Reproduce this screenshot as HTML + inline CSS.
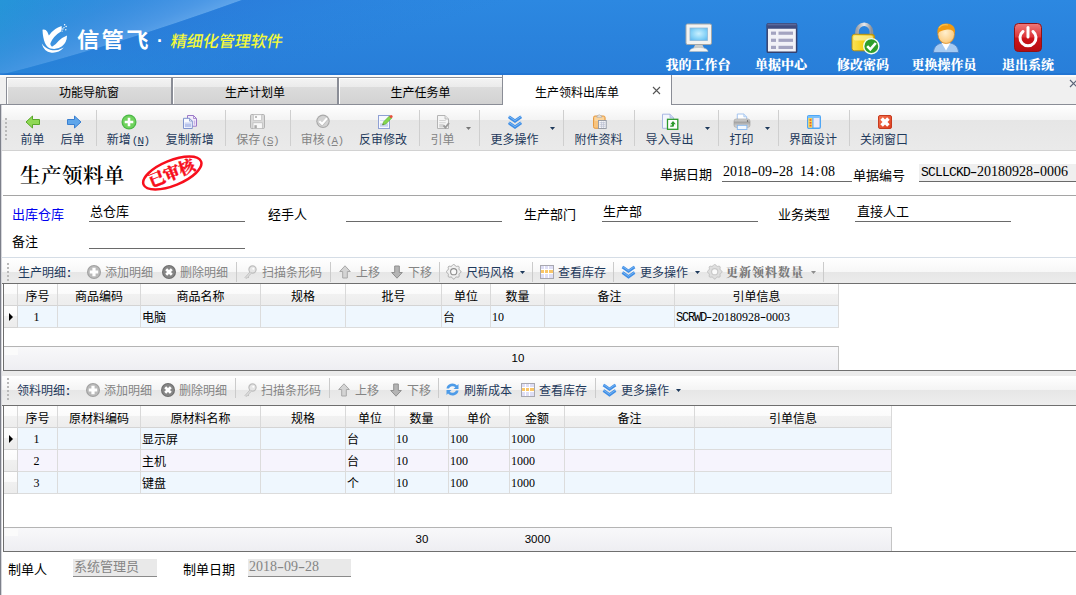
<!DOCTYPE html>
<html lang="zh-CN">
<head>
<meta charset="utf-8">
<title>生产领料出库单</title>
<style>
*{box-sizing:border-box;margin:0;padding:0}
html,body{width:1076px;height:595px;overflow:hidden;background:#fff}
body{position:relative;font-family:"Liberation Sans","Noto Sans CJK SC",sans-serif;font-size:12px;color:#000}
.a{position:absolute;white-space:nowrap}
.serif{font-family:"Liberation Serif","Noto Serif CJK SC",serif}
.bold{font-weight:bold}
#hdr{left:0;top:0;width:1076px;height:75px;overflow:hidden;background:#2a80dd}
.hl{color:#fff;font-weight:900;font-size:13px;top:58px;text-align:center;width:90px;line-height:14px}
#tabbar{left:0;top:75px;width:1076px;height:30px;background:linear-gradient(#fbfbfb 0,#fbfbfb 2px,#f0f0f0 2px);border-bottom:1px solid #8a8d96}
.tab{top:77px;height:27px;border:1px solid #8a8d96;border-bottom:none;background:linear-gradient(#f4f4f4 0%,#ebebeb 34%,#dcdcdc 34%,#d2d2d2 100%);box-shadow:inset 1px 1px 0 #fff;text-align:center;line-height:30px;font-size:12px}
#tb{left:1px;top:105px;width:1075px;height:46px;background:linear-gradient(#fff 0,#f3f3f3 15px,#e6e6e6 15px,#eaeaea 45px);border-bottom:1px solid #d2d2d2}
#lb1{left:0;top:105px;width:1px;height:490px;background:#7d808a}
#lb2{left:1px;top:105px;width:1px;height:490px;background:#d6d7dc}
.grip{width:2px;height:2px;background:#b9b9b9}
.tbt{top:133px;font-size:12px;color:#1e395b;text-align:center;line-height:14px}
.ak{font-family:"Liberation Mono",monospace;font-size:11px;letter-spacing:-0.8px;margin-left:1px}
.dis{color:#848484 !important}
.sep{top:110px;width:1px;height:36px;background:#cfcfcf}
.dd{width:0;height:0;border-left:3px solid transparent;border-right:3px solid transparent;border-top:3px solid #1e395b}
.lbl{font-size:13px;line-height:16px}
.fld{font-family:"Liberation Serif","Noto Sans CJK SC",serif;font-size:14px;line-height:16px}
.pb{display:inline-block;width:7px;text-align:center}
.mb{font-family:"Liberation Mono",monospace;font-size:13px;letter-spacing:-0.8px}
.ps{display:inline-block;width:6px;text-align:center}
.ms{font-family:"Liberation Mono",monospace;font-size:12px;letter-spacing:-1.2px}
.ul{height:1px;background:#6a6a6a}
.stb{left:2px;width:1074px;border-bottom:1px solid #6f6f6f}
#stb1{top:257px;height:27px;border-top:1px solid #d5dde6;background:linear-gradient(#fff 0,#f7f7f7 14px,#e6e6e6 14px,#ececec 25px)}
#stb2{top:371px;height:35px;background:linear-gradient(#ebebeb 0,#ebebeb 5px,#fff 5px,#f4f4f4 19px,#e6e6e6 19px,#eeeeee 34px)}
.st{font-size:12px;line-height:14px;color:#1e395b}
.ssep{width:1px;height:20px;background:#cbcbcb}
.grid{border-left:1px solid #6f6f6f;border-bottom:1px solid #6f6f6f;background:#fff;overflow:hidden}
.gh{top:0;height:22px;background:linear-gradient(#fefefe 0%,#fbfbfb 45%,#f1f1f1 50%,#ededed 100%);border-right:1px solid #d9d9d9;border-bottom:1px solid #d4d4d4;text-align:center;line-height:26px;font-size:12px;overflow:hidden}
.gc{height:22px;border-right:1px solid #dcdcdc;border-bottom:1px solid #dcdcdc;line-height:21px;padding-top:2px;font-size:12px;padding-left:1px;overflow:hidden}
.gc.c{text-align:center;padding-left:0;padding-right:2px}
.num{font-family:"Liberation Serif",serif;font-size:12px;position:relative;top:-1px}
.hy{transform:scaleX(1.5)}
.col{margin-left:1px;font-weight:900}
.r1{background:#eff7fe}
.r2{background:#f6f4fd}
.ind{background:linear-gradient(#fefefe 0,#fbfbfb 45%,#f0f0f0 50%,#ececec 100%);border-right:1px solid #d4d4d4;border-bottom:1px solid #d4d4d4}
.tri{position:absolute;left:5px;top:7px;width:0;height:0;border-top:4px solid transparent;border-bottom:4px solid transparent;border-left:4px solid #000}
.gf{background:linear-gradient(#f8f8fa,#eeeef2);border-top:1px solid #b4b4b4;border-right:1px solid #c4c4c4}
.gft{font-size:11.5px;line-height:23px;text-align:center;height:21px}
</style>
</head>
<body>
<!-- HEADER -->
<div id="hdr" class="a">
<svg class="a" style="left:0;top:0" width="1076" height="75" viewBox="0 0 1076 75">
<defs>
<linearGradient id="hg" x1="0" y1="0" x2="0" y2="1"><stop offset="0" stop-color="#2c88e1"/><stop offset="1" stop-color="#287ed9"/></linearGradient>
<linearGradient id="tl" x1="0" y1="0" x2="1" y2="0"><stop offset="0" stop-color="#2596d7" stop-opacity="0.9"/><stop offset="1" stop-color="#2a8ade" stop-opacity="0"/></linearGradient>
<linearGradient id="band" gradientUnits="userSpaceOnUse" x1="60" y1="-20" x2="95" y2="62"><stop offset="0" stop-color="#2f8cdd" stop-opacity="0"/><stop offset="0.5" stop-color="#408fe0" stop-opacity="0.55"/><stop offset="0.85" stop-color="#509ae6" stop-opacity="0.9"/><stop offset="1" stop-color="#5ea4ea"/></linearGradient>
<linearGradient id="low" gradientUnits="userSpaceOnUse" x1="111" y1="45" x2="135" y2="121"><stop offset="0" stop-color="#2977d8" stop-opacity="0.55"/><stop offset="0.35" stop-color="#2979d9" stop-opacity="0.3"/><stop offset="1" stop-color="#287ed9" stop-opacity="0"/></linearGradient>
</defs>
<rect width="1076" height="75" fill="url(#hg)"/>
<rect width="260" height="75" fill="url(#tl)"/>
<path d="M0 75 Q110 47.5 242 0 L0 0 Z" fill="url(#band)"/>
<path d="M0 75 Q110 47.5 242 0 L520 0 L420 75 Z" fill="url(#low)"/>
<rect y="73" width="1076" height="2" fill="#1b6acb" opacity="0.45"/>
</svg>
</div>
<!-- logo -->
<svg class="a" style="left:38px;top:20px" width="34" height="36" viewBox="0 0 34 36">
<path d="M4.500 9.700 Q7.500 8.800 9.300 11.800 L10.900 15.400 Q16 8 23.600 5.900 Q24.200 9 23 11.600 Q15.500 16 12.400 23.300 Q12 26 14 26.800 Q18 24.500 20.500 21 Q24 17.300 29 15.400 Q29 22 24 26.300 Q19 30.200 12.500 28.600 Q5.200 26 4.500 9.700 Z" fill="#fff"/>
<path d="M3.800 23.500 Q5.500 31.500 13.500 32.700 Q20.500 33.400 25.800 27.600 Q19.500 31.300 13 30 Q7 28.400 3.800 23.500 Z" fill="#fff"/>
<circle cx="26.600" cy="4.800" r="0.75" fill="#fff"/><circle cx="28.100" cy="6.400" r="0.75" fill="#fff"/><circle cx="26" cy="7.600" r="0.7" fill="#fff"/><circle cx="27.800" cy="9.700" r="0.7" fill="#fff"/><circle cx="24.900" cy="9" r="0.7" fill="#fff"/><circle cx="24.100" cy="11.100" r="0.65" fill="#fff"/>
</svg>
<div class="a" style="left:77px;top:24.5px;font-size:21px;line-height:30px;color:#fff;font-weight:700;letter-spacing:2.2px;transform:scaleX(1.06);transform-origin:0 0">信管飞</div>
<div class="a" style="left:157px;top:30px;font-size:18px;line-height:22px;color:#fff;font-weight:bold">·</div>
<div class="a" style="left:171px;top:32px;font-size:16px;line-height:20px;color:#f4f93a;font-weight:500;transform:skewX(-10deg);letter-spacing:0px">精细化管理软件</div>

<!-- header icons -->
<svg class="a" style="left:685px;top:23px" width="28" height="30" viewBox="0 0 28 30">
<defs><radialGradient id="scr" cx="0.5" cy="0.45" r="0.7"><stop offset="0" stop-color="#c9f0ff"/><stop offset="0.6" stop-color="#86d2f7"/><stop offset="1" stop-color="#5fb6ee"/></radialGradient></defs>
<rect x="1" y="1" width="25.5" height="20.5" rx="1.5" fill="#f3f3f1" stroke="#a5a8a8" stroke-width="1"/>
<rect x="5" y="5" width="17.5" height="12.5" fill="url(#scr)" stroke="#8fb8d8" stroke-width="0.8"/>
<path d="M10 22 L17.5 22 L19 25 L8.5 25 Z" fill="#c9cccc"/>
<path d="M4.5 28.5 C5 25.5 9 24.5 13.7 24.5 C18.5 24.5 22.5 25.5 23 28.5 Z" fill="#f4f4f2" stroke="#b9bcbc" stroke-width="0.6"/>
</svg>
<svg class="a" style="left:766px;top:23px" width="32" height="30" viewBox="0 0 32 30">
<rect x="1.2" y="1" width="29.4" height="28.3" rx="1" fill="#f1f1f7" stroke="#35406e" stroke-width="1.5"/>
<rect x="0.8" y="0.3" width="30.2" height="5.4" rx="1" fill="#3f4d80"/>
<rect x="1.5" y="0.8" width="28.8" height="1.6" fill="#5a689a"/>
<rect x="5" y="8.6" width="5" height="3.2" fill="#a3a3c0"/><rect x="12.5" y="8.6" width="14.5" height="3.2" fill="#a3a3c0"/>
<rect x="5" y="15.7" width="5" height="3.2" fill="#a3a3c0"/><rect x="12.5" y="15.7" width="14.5" height="3.2" fill="#a3a3c0"/>
<rect x="5" y="22.8" width="5" height="3.2" fill="#a3a3c0"/><rect x="12.5" y="22.8" width="14.5" height="3.2" fill="#a3a3c0"/>
</svg>
<svg class="a" style="left:850px;top:22px" width="32" height="34" viewBox="0 0 32 34">
<defs><linearGradient id="lk" x1="0" y1="0" x2="1" y2="0"><stop offset="0" stop-color="#f9e25a"/><stop offset="0.45" stop-color="#f6d21c"/><stop offset="1" stop-color="#d9a90c"/></linearGradient>
<linearGradient id="shk" x1="0" y1="0" x2="1" y2="0"><stop offset="0" stop-color="#9ea2a8"/><stop offset="0.5" stop-color="#e8eaee"/><stop offset="1" stop-color="#8f9399"/></linearGradient></defs>
<path d="M7 14 V9.5 a7.2 7.2 0 0 1 14.400 0 V14" fill="none" stroke="url(#shk)" stroke-width="3.6"/>
<rect x="2" y="12.3" width="22.5" height="16.5" rx="2.5" fill="url(#lk)" stroke="#b88d08" stroke-width="0.9"/>
<rect x="3.5" y="13.6" width="19.5" height="5" rx="2" fill="#fdf3a0" opacity="0.75"/>
<circle cx="21.3" cy="24.2" r="7.6" fill="#2f9e2c" stroke="#f4fff0" stroke-width="1.4"/>
<path d="M17.200 24.200 L20.300 27.400 L25.800 21" fill="none" stroke="#fff" stroke-width="2.6"/>
</svg>
<svg class="a" style="left:932px;top:22px" width="28" height="32" viewBox="0 0 28 32">
<defs><radialGradient id="fc" cx="0.45" cy="0.4" r="0.7"><stop offset="0" stop-color="#fff0cf"/><stop offset="0.7" stop-color="#fbd08a"/><stop offset="1" stop-color="#eea94e"/></radialGradient></defs>
<path d="M1.500 30.500 C1.500 24 6.500 20.500 14 20.500 C21.500 20.500 26.500 24 26.500 30.500 Z" fill="#a5caf2" stroke="#4f86cc" stroke-width="1"/>
<path d="M9.500 20.800 L14 28.500 L18.500 20.800 Z" fill="#fff"/>
<ellipse cx="14.200" cy="12.300" rx="8.300" ry="9.300" fill="url(#fc)" stroke="#d98a1e" stroke-width="0.7"/>
<path d="M5.600 11.500 C4.500 4.500 9.500 1.200 14.500 1.500 C20.500 1.700 24 5.500 22.800 11.500 C21.500 8.500 18 6.800 14 7.800 C10.500 8.500 7.500 9 5.600 11.500 Z" fill="#f09a12"/>
<path d="M7 6 C9 3 13 2.300 16 3" fill="none" stroke="#fbc04e" stroke-width="1.2"/>
</svg>
<svg class="a" style="left:1014px;top:23px" width="28" height="29" viewBox="0 0 28 29">
<defs><linearGradient id="rg" x1="0" y1="0" x2="0" y2="1"><stop offset="0" stop-color="#ef7a7a"/><stop offset="0.48" stop-color="#dc3438"/><stop offset="0.52" stop-color="#cc1419"/><stop offset="1" stop-color="#b50d12"/></linearGradient></defs>
<rect x="0.5" y="0.5" width="27" height="28" rx="4" fill="url(#rg)" stroke="#8f1216" stroke-width="1"/>
<path d="M9 8.500 A8 8 0 1 0 19 8.500" fill="none" stroke="#fff" stroke-width="3" stroke-linecap="round"/>
<line x1="14" y1="4.500" x2="14" y2="14" stroke="#fff" stroke-width="3" stroke-linecap="round"/>
</svg>
<div class="a hl serif" style="left:653px">我的工作台</div>
<div class="a hl serif" style="left:736px">单据中心</div>
<div class="a hl serif" style="left:818px">修改密码</div>
<div class="a hl serif" style="left:899px">更换操作员</div>
<div class="a hl serif" style="left:983px">退出系统</div>

<!-- TABS -->
<div id="tabbar" class="a"></div>
<div class="a tab" style="left:6px;width:166px">功能导航窗</div>
<div class="a tab" style="left:172px;width:166px">生产计划单</div>
<div class="a tab" style="left:338px;width:165px">生产任务单</div>
<div class="a" style="left:502px;top:75px;width:170px;height:30px;background:#fff;border-left:1px solid #8a8d96;border-right:1px solid #8a8d96;line-height:36px;font-size:12px;padding-left:32px">生产领料出库单</div>
<svg class="a" style="left:652px;top:86px" width="9" height="9" viewBox="0 0 9 9"><path d="M1 1 L8 8 M8 1 L1 8" stroke="#555" stroke-width="1.1"/></svg>
<svg class="a" style="left:1069px;top:79px" width="9" height="9" viewBox="0 0 9 9"><path d="M1 1 L8 8 M8 1 L1 8" stroke="#5a6478" stroke-width="1.2"/></svg>
<!-- TOOLBAR -->
<div id="tb" class="a"></div>
<div class="a" id="lb1"></div><div class="a" id="lb2"></div>
<div class="a grip" style="left:5px;top:118px"></div>
<div class="a grip" style="left:5px;top:122px"></div>
<div class="a grip" style="left:5px;top:126px"></div>
<div class="a grip" style="left:5px;top:130px"></div>
<div class="a grip" style="left:5px;top:134px"></div>
<div class="a grip" style="left:5px;top:138px"></div>
<div class="a tbt" style="left:-7.5px;width:80px">前单</div>
<div class="a tbt" style="left:32.5px;width:80px">后单</div>
<div class="a tbt" style="left:88.0px;width:80px">新增<span class="ak">(<u>N</u>)</span></div>
<div class="a tbt" style="left:149.7px;width:80px">复制新增</div>
<div class="a tbt dis" style="left:217.5px;width:80px">保存<span class="ak">(<u>S</u>)</span></div>
<div class="a tbt dis" style="left:282.0px;width:80px">审核<span class="ak">(<u>A</u>)</span></div>
<div class="a tbt" style="left:343.0px;width:80px">反审修改</div>
<div class="a tbt dis" style="left:402.5px;width:80px">引单</div>
<div class="a tbt" style="left:474.5px;width:80px">更多操作</div>
<div class="a tbt" style="left:558.5px;width:80px">附件资料</div>
<div class="a tbt" style="left:629.5px;width:80px">导入导出</div>
<div class="a tbt" style="left:701.5px;width:80px">打印</div>
<div class="a tbt" style="left:773.0px;width:80px">界面设计</div>
<div class="a tbt" style="left:844.0px;width:80px">关闭窗口</div>
<div class="a sep" style="left:96px"></div>
<div class="a sep" style="left:225px"></div>
<div class="a sep" style="left:290px"></div>
<div class="a sep" style="left:419px"></div>
<div class="a sep" style="left:479px"></div>
<div class="a sep" style="left:563px"></div>
<div class="a sep" style="left:634px"></div>
<div class="a sep" style="left:718px"></div>
<div class="a sep" style="left:778px"></div>
<div class="a sep" style="left:849px"></div>
<svg class="a" style="left:466px;top:127px" width="5" height="3" viewBox="0 0 5 3"><path d="M0 0 H5 L2.500 3 Z" fill="#777"/></svg>
<svg class="a" style="left:550px;top:127px" width="5" height="3" viewBox="0 0 5 3"><path d="M0 0 H5 L2.500 3 Z" fill="#1e395b"/></svg>
<svg class="a" style="left:705px;top:127px" width="5" height="3" viewBox="0 0 5 3"><path d="M0 0 H5 L2.500 3 Z" fill="#1e395b"/></svg>
<svg class="a" style="left:765px;top:127px" width="5" height="3" viewBox="0 0 5 3"><path d="M0 0 H5 L2.500 3 Z" fill="#1e395b"/></svg>
<svg class="a" style="left:25px;top:115px" width="16" height="14" viewBox="0 0 16 14"><path d="M1 7 L7.5 1 V4.5 H14.5 V9.5 H7.5 V13 Z" fill="#8fd854" stroke="#5aa82a" stroke-width="1"/></svg>
<svg class="a" style="left:66px;top:115px" width="16" height="14" viewBox="0 0 16 14"><path d="M15 7 L8.5 1 V4.5 H1.5 V9.5 H8.5 V13 Z" fill="#5fa6ea" stroke="#3a7fd0" stroke-width="1"/></svg>
<svg class="a" style="left:121px;top:114px" width="16" height="16" viewBox="0 0 16 16"><circle cx="8" cy="8" r="7.5" fill="#4cb848"/><circle cx="8" cy="8" r="6.3" fill="#6fd25c"/><path d="M8 3.7 V12.3 M3.7 8 H12.3" stroke="#fff" stroke-width="2.6"/></svg>
<svg class="a" style="left:183px;top:115px" width="15" height="14" viewBox="0 0 15 14"><path d="M4.500 0.500 H10.500 L13.500 3.500 V11.200 H4.500 Z" fill="#f3edfb" stroke="#9a78c8"/><path d="M10.500 0.500 V3.500 H13.500" fill="none" stroke="#9a78c8" stroke-width="0.8"/><rect x="10.800" y="5.500" width="1.400" height="4.200" fill="#c9b4e6"/><path d="M0.500 3.300 H6.500 L9.300 6.100 V13.500 H0.500 Z" fill="#f8faff" stroke="#7f93cc"/><path d="M6.500 3.300 V6.100 H9.300" fill="none" stroke="#7f93cc" stroke-width="0.8"/><rect x="1.800" y="7.600" width="6.200" height="4.600" fill="#b7c3ec"/><rect x="1.800" y="7.600" width="6.200" height="1" fill="#dfe5f8"/></svg>
<svg class="a" style="left:250px;top:114px" width="15" height="15" viewBox="0 0 15 15"><rect x="0.500" y="0.500" width="14" height="14" rx="1.200" fill="#d9d9d9" stroke="#b2b2b2"/><rect x="3.500" y="0.800" width="8" height="5.600" fill="#fcfcfc" stroke="#c2c2c2" stroke-width="0.7"/><rect x="5.200" y="2.200" width="1.600" height="1.600" fill="#9a9a9a"/><rect x="3" y="8.800" width="9.300" height="5.700" fill="#f8f8f8" stroke="#b8b8b8" stroke-width="0.7"/><rect x="4.400" y="11.200" width="2.400" height="3" fill="#a9a9a9"/></svg>
<svg class="a" style="left:316px;top:114px" width="14" height="15" viewBox="0 0 14 15"><circle cx="7" cy="7.300" r="6.700" fill="#a9a9a9"/><circle cx="7" cy="7.300" r="5.600" fill="#d2d2d2"/><path d="M3.300 7.800 L6.100 10.500 L11.200 4.600" fill="none" stroke="#8f8f8f" stroke-width="2.600" opacity="0.35"/><path d="M3.300 7.200 L6.100 10 L11 4.300" fill="none" stroke="#fff" stroke-width="2.200"/></svg>
<svg class="a" style="left:378px;top:114px" width="15" height="15" viewBox="0 0 15 15"><rect x="0.500" y="1.500" width="11" height="13" fill="#f6f8fe" stroke="#8fa0d4"/><rect x="2" y="6" width="8" height="0.800" fill="#cdd6f0"/><rect x="2" y="9.300" width="8" height="3.500" fill="#c9d3f0"/><path d="M4.500 11 L5.600 7.800 L11.400 2 L13.600 4.200 L7.800 10 Z" fill="#84d650" stroke="#58b02c" stroke-width="0.6"/><circle cx="13.100" cy="2.400" r="1.500" fill="#e4503c"/><path d="M4.500 11 L5 9.500 L6 10.500 Z" fill="#6a5a4a"/></svg>
<svg class="a" style="left:437px;top:115px" width="13" height="14" viewBox="0 0 13 14"><path d="M0.500 0.500 H8 L11.500 4 V13.500 H0.500 Z" fill="#f5f5f5" stroke="#b4b4b4"/><path d="M8 0.500 V4 H11.500" fill="#e4e4e4" stroke="#b4b4b4" stroke-width="0.8"/><rect x="2.200" y="5" width="6.500" height="0.900" fill="#cfcfcf"/><rect x="2.200" y="7.300" width="6.500" height="0.900" fill="#cfcfcf"/><rect x="2.200" y="9" width="4.500" height="3.500" fill="#d4d4d4"/><path d="M6.500 10.300 L8.400 12.600 L12 8" fill="none" stroke="#9c9c9c" stroke-width="1.900"/></svg>
<svg class="a" style="left:507px;top:115px" width="16" height="14" viewBox="0 0 16 14"><path d="M1.800 1.800 L8 6 L14.200 1.800" fill="none" stroke="#3f8ee6" stroke-width="3.200"/><path d="M1.800 7.800 L8 12 L14.200 7.800" fill="none" stroke="#3f8ee6" stroke-width="3.200"/><path d="M1.800 1.400 L8 5.600 L14.200 1.400" fill="none" stroke="#7cb8f4" stroke-width="1"/><path d="M1.800 7.400 L8 11.600 L14.200 7.400" fill="none" stroke="#7cb8f4" stroke-width="1"/></svg>
<svg class="a" style="left:593px;top:114px" width="14" height="15" viewBox="0 0 14 15"><rect x="0.500" y="2" width="11.600" height="12.300" rx="1.600" fill="#f8c47e" stroke="#e59a42"/><rect x="1.600" y="3" width="9.400" height="4" rx="1" fill="#fbd9a6" opacity="0.8"/><path d="M3.800 3.200 Q3.800 1.400 5.200 1.400 Q6.200 0.200 7.300 1.400 Q8.800 1.400 8.800 3.200 Z" fill="#ececec" stroke="#a9a9a9" stroke-width="0.700"/><rect x="5.500" y="6.500" width="7.700" height="8" fill="#f6f7fa" stroke="#8f95a3" stroke-width="0.900"/><path d="M6.500 8.600 H12.300 M6.500 10.400 H12.300 M6.500 12.200 H12.300 M8.600 7.500 V14 M10.600 7.500 V14" stroke="#b9bfd0" stroke-width="0.700"/></svg>
<svg class="a" style="left:662px;top:113px" width="17" height="17" viewBox="0 0 17 17"><path d="M0.500 1.200 H8 L11.600 4.800 V15.300 H0.500 Z" fill="#f3f6fd" stroke="#a9b7e2"/><path d="M8 1.200 V4.800 H11.600" fill="#cfd8f3" stroke="#a9b7e2" stroke-width="0.8"/><rect x="5.500" y="6.300" width="10.300" height="10" fill="#fff" stroke="#2d9a2d" stroke-width="1.300"/><path d="M8.200 13.800 H11.300 Q12.200 13.500 12 11.300 H13.800 L11 8 L8.300 11.300 H10 Q10.200 12.300 9.600 12.500 H8.200 Z" fill="#2d9a2d"/></svg>
<svg class="a" style="left:733px;top:113px" width="18" height="17" viewBox="0 0 18 17"><defs><linearGradient id="pg" x1="0" y1="0" x2="0" y2="1"><stop offset="0" stop-color="#dadada"/><stop offset="0.45" stop-color="#a2a2a2"/><stop offset="0.55" stop-color="#b4b4b4"/><stop offset="1" stop-color="#dcdcdc"/></linearGradient></defs><path d="M4.300 1 H10.800 L13.700 3.800 V7 H4.300 Z" fill="#fdfeff" stroke="#9cc0ee" stroke-width="0.9"/><path d="M10.800 1 V3.800 H13.700" fill="#d6e6fa" stroke="#9cc0ee" stroke-width="0.7"/><rect x="1" y="6" width="16" height="8.300" rx="2.200" fill="url(#pg)" stroke="#9a9a9a" stroke-width="0.6"/><circle cx="14.600" cy="8" r="0.700" fill="#555"/><rect x="4.300" y="12.300" width="9.600" height="4.200" fill="#f2f8ff" stroke="#84b6ee" stroke-width="0.9"/></svg>
<svg class="a" style="left:807px;top:115px" width="14" height="14" viewBox="0 0 14 14"><rect x="0.700" y="0.700" width="12.600" height="12.600" rx="1.200" fill="#ece9f9" stroke="#4fa6f5" stroke-width="1.400"/><rect x="1" y="1" width="12" height="2" fill="#7cc0fa"/><rect x="1.400" y="3" width="4" height="9.600" fill="#f9d648"/><rect x="2.600" y="4.200" width="1.800" height="1.600" fill="#e2543c"/><rect x="2.600" y="7" width="1.800" height="1.600" fill="#e2543c"/><rect x="2.600" y="9.800" width="1.800" height="1.600" fill="#e2543c"/><line x1="5.900" y1="3" x2="5.900" y2="13" stroke="#4fa6f5" stroke-width="1.100"/></svg>
<svg class="a" style="left:878px;top:115px" width="14" height="14" viewBox="0 0 14 14"><defs><linearGradient id="cg" x1="0" y1="0" x2="1" y2="1"><stop offset="0" stop-color="#f4724e"/><stop offset="1" stop-color="#dc3c1e"/></linearGradient></defs><rect x="0.500" y="0.500" width="13" height="13" rx="1.500" fill="url(#cg)" stroke="#c63a1e"/><path d="M3.600 3.600 L10.400 10.400 M10.400 3.600 L3.600 10.400" stroke="#fff" stroke-width="3.600"/></svg>
<!-- TITLE -->
<div class="a serif" style="left:20px;top:163px;font-size:20.5px;line-height:26px;font-weight:600;letter-spacing:0.5px">生产领料单</div>
<div class="a" style="left:140px;top:153px;width:64px;height:40px"><svg class="a" style="left:0;top:0" width="64" height="40" viewBox="0 0 64 40"><ellipse cx="32.3" cy="20" rx="31" ry="12.5" transform="rotate(-22 32.3 20)" fill="none" stroke="#f80f1c" stroke-width="2.5"/></svg><div class="a serif" style="left:7px;top:11px;width:50px;text-align:center;font-size:16.5px;line-height:20px;font-weight:900;color:#f80f1c;transform:rotate(-22deg);letter-spacing:-0.5px;-webkit-text-stroke:0.3px #f80f1c">已审核</div></div>
<div class="a lbl" style="left:660px;top:167px">单据日期</div>
<div class="a fld" style="left:723px;top:164px">2018<span class="pb hy">-</span>09<span class="pb hy">-</span>28<span class="pb">&nbsp;</span>14<span class="pb">:</span>08</div>
<div class="a ul" style="left:722px;top:181px;width:130px"></div>
<div class="a lbl" style="left:853px;top:168px">单据编号</div>
<div class="a" style="left:919px;top:164px;width:157px;height:17px;background:#efefef"></div>
<div class="a fld" style="left:921px;top:164px"><span class="mb">SCLLCKD</span><span class="pb hy">-</span>20180928<span class="pb hy">-</span>0006</div>
<div class="a ul" style="left:919px;top:181px;width:157px"></div>
<div class="a" style="left:3px;top:195px;width:1073px;height:1px;background:#a5a5a5"></div>
<!-- FORM -->
<div class="a lbl" style="left:12px;top:207px;color:#0000f0">出库仓库</div>
<div class="a lbl" style="left:90px;top:204px">总仓库</div>
<div class="a ul" style="left:89px;top:221px;width:156px"></div>
<div class="a lbl" style="left:268px;top:207px">经手人</div>
<div class="a ul" style="left:346px;top:221px;width:156px"></div>
<div class="a lbl" style="left:524px;top:207px">生产部门</div>
<div class="a lbl" style="left:603px;top:204px">生产部</div>
<div class="a ul" style="left:602px;top:221px;width:156px"></div>
<div class="a lbl" style="left:778px;top:207px">业务类型</div>
<div class="a lbl" style="left:857px;top:204px">直接人工</div>
<div class="a ul" style="left:855px;top:221px;width:156px"></div>
<div class="a lbl" style="left:12px;top:234px">备注</div>
<div class="a ul" style="left:89px;top:248px;width:156px"></div>
<!-- SUBTOOLBAR 1 -->
<div class="a stb" id="stb1"></div>
<div class="a grip" style="left:7px;top:263px"></div>
<div class="a grip" style="left:7px;top:267px"></div>
<div class="a grip" style="left:7px;top:271px"></div>
<div class="a grip" style="left:7px;top:275px"></div>
<div class="a grip" style="left:7px;top:279px"></div>
<div class="a st " style="left:18px;top:266px">生产明细<b class="col">:</b></div>
<svg class="a" style="left:87px;top:265px" width="14" height="14" viewBox="0 0 14 14"><circle cx="7" cy="7" r="7" fill="#a0a0a0"/><circle cx="7" cy="7" r="5.900" fill="#bababa"/><path d="M7 2.800 V11.200 M2.800 7 H11.200" stroke="#fff" stroke-width="3.200"/></svg>
<div class="a st dis" style="left:105px;top:266px">添加明细</div>
<svg class="a" style="left:162px;top:265px" width="14" height="14" viewBox="0 0 14 14"><circle cx="7" cy="7" r="7" fill="#6e6e6e"/><circle cx="7" cy="7" r="5.900" fill="#868686"/><path d="M4.200 4.200 L9.800 9.800 M9.800 4.200 L4.200 9.800" stroke="#fff" stroke-width="2.700"/></svg>
<div class="a st dis" style="left:180px;top:266px">删除明细</div>
<div class="a ssep" style="left:236px;top:262px"></div>
<svg class="a" style="left:244px;top:265px" width="13" height="14" viewBox="0 0 13 14"><circle cx="8.5" cy="4.5" r="3.6" fill="#e6e6e6" stroke="#bdbdbd" stroke-width="1.2"/><circle cx="9.3" cy="3.7" r="1" fill="#fff"/><path d="M6 7 L1 12.5 L2 13.5 L3.2 12.4 L4 13 L5 12 L4.4 11.2 L7.4 8.3" fill="#dedede" stroke="#bdbdbd" stroke-width="0.9"/></svg>
<div class="a st dis" style="left:262px;top:266px">扫描条形码</div>
<div class="a ssep" style="left:330px;top:262px"></div>
<svg class="a" style="left:339px;top:265px" width="12" height="14" viewBox="0 0 12 14"><path d="M6 0.8 L11.3 6.5 H8.3 V13 H3.7 V6.5 H0.7 Z" fill="#d4d4d4" stroke="#a8a8a8" stroke-width="1"/></svg>
<div class="a st dis" style="left:356px;top:266px">上移</div>
<svg class="a" style="left:391px;top:265px" width="12" height="14" viewBox="0 0 12 14"><path d="M6 13.2 L11.3 7.5 H8.3 V1 H3.7 V7.5 H0.7 Z" fill="#b4b4b4" stroke="#8f8f8f" stroke-width="1"/></svg>
<div class="a st dis" style="left:408px;top:266px">下移</div>
<div class="a ssep" style="left:439px;top:262px"></div>
<svg class="a" style="left:446px;top:264px" width="16" height="16" viewBox="0 0 16 16"><path d="M15.0 7.7 L14.9 8.2 L14.6 8.6 L14.1 9.0 L13.7 9.3 L13.3 9.6 L13.1 9.9 L13.0 10.3 L13.0 10.8 L13.1 11.3 L13.2 11.9 L13.1 12.4 L12.9 12.9 L12.4 13.1 L11.9 13.2 L11.3 13.1 L10.8 13.0 L10.3 13.0 L9.9 13.1 L9.6 13.3 L9.3 13.7 L9.0 14.1 L8.6 14.6 L8.2 14.9 L7.7 15.0 L7.2 14.9 L6.8 14.6 L6.4 14.1 L6.1 13.7 L5.8 13.3 L5.5 13.1 L5.1 13.0 L4.6 13.0 L4.1 13.1 L3.5 13.2 L3.0 13.1 L2.5 12.9 L2.3 12.4 L2.2 11.9 L2.3 11.3 L2.4 10.8 L2.4 10.3 L2.3 9.9 L2.1 9.6 L1.7 9.3 L1.3 9.0 L0.8 8.6 L0.5 8.2 L0.4 7.7 L0.5 7.2 L0.8 6.8 L1.3 6.4 L1.7 6.1 L2.1 5.8 L2.3 5.5 L2.4 5.1 L2.4 4.6 L2.3 4.1 L2.2 3.5 L2.3 3.0 L2.5 2.5 L3.0 2.3 L3.5 2.2 L4.1 2.3 L4.6 2.4 L5.1 2.4 L5.5 2.3 L5.8 2.1 L6.1 1.7 L6.4 1.3 L6.8 0.8 L7.2 0.5 L7.7 0.4 L8.2 0.5 L8.6 0.8 L9.0 1.3 L9.3 1.7 L9.6 2.1 L9.9 2.3 L10.3 2.4 L10.8 2.4 L11.3 2.3 L11.9 2.2 L12.4 2.3 L12.9 2.5 L13.1 3.0 L13.2 3.5 L13.1 4.1 L13.0 4.6 L13.0 5.1 L13.1 5.5 L13.3 5.8 L13.7 6.1 L14.1 6.4 L14.6 6.8 L14.9 7.2 Z" fill="#efefef" stroke="#a8a8a8" stroke-width="1"/><circle cx="7.700" cy="7.700" r="3.100" fill="#fafafa" stroke="#8c8c8c" stroke-width="1.100"/></svg>
<div class="a st " style="left:466px;top:266px">尺码风格</div>
<svg class="a" style="left:520px;top:271px" width="5" height="3" viewBox="0 0 5 3"><path d="M0 0 H5 L2.500 3 Z" fill="#1e395b"/></svg>
<div class="a ssep" style="left:532px;top:262px"></div>
<svg class="a" style="left:540px;top:265px" width="14" height="14" viewBox="0 0 14 14"><rect x="0.500" y="0.500" width="13" height="13" fill="#fff" stroke="#a8a8b0" stroke-width="1"/><rect x="1" y="1" width="3" height="3" fill="#dedef5"/><rect x="5" y="1" width="3" height="3" fill="#dedef5"/><rect x="9" y="1" width="4" height="3" fill="#dedef5"/><rect x="1" y="5" width="3" height="3" fill="#f9c668"/><rect x="5" y="5" width="3" height="3" fill="#f9c668"/><rect x="9" y="5" width="4" height="3" fill="#f9c668"/><rect x="1" y="9" width="3" height="4" fill="#dedef5"/><rect x="5" y="9" width="3" height="4" fill="#dedef5"/><rect x="9" y="9" width="4" height="4" fill="#dedef5"/></svg>
<div class="a st " style="left:558px;top:266px">查看库存</div>
<div class="a ssep" style="left:613px;top:262px"></div>
<svg class="a" style="left:621px;top:265px" width="15" height="14" viewBox="0 0 15 14"><path d="M1.500 2 L7.500 6.200 L13.500 2" fill="none" stroke="#3f8ee6" stroke-width="3"/><path d="M1.500 7.600 L7.500 11.800 L13.500 7.600" fill="none" stroke="#3f8ee6" stroke-width="3"/><path d="M1.500 1.500 L7.500 5.700 L13.500 1.500" fill="none" stroke="#7cb8f4" stroke-width="0.900"/><path d="M1.500 7.100 L7.500 11.300 L13.500 7.100" fill="none" stroke="#7cb8f4" stroke-width="0.900"/></svg>
<div class="a st " style="left:640px;top:266px">更多操作</div>
<svg class="a" style="left:695px;top:271px" width="5" height="3" viewBox="0 0 5 3"><path d="M0 0 H5 L2.500 3 Z" fill="#1e395b"/></svg>
<svg class="a" style="left:707px;top:264px" width="16" height="16" viewBox="0 0 16 16"><path d="M15.0 7.7 L14.9 8.2 L14.6 8.6 L14.1 9.0 L13.7 9.3 L13.3 9.6 L13.1 9.9 L13.0 10.3 L13.0 10.8 L13.1 11.3 L13.2 11.9 L13.1 12.4 L12.9 12.9 L12.4 13.1 L11.9 13.2 L11.3 13.1 L10.8 13.0 L10.3 13.0 L9.9 13.1 L9.6 13.3 L9.3 13.7 L9.0 14.1 L8.6 14.6 L8.2 14.9 L7.7 15.0 L7.2 14.9 L6.8 14.6 L6.4 14.1 L6.1 13.7 L5.8 13.3 L5.5 13.1 L5.1 13.0 L4.6 13.0 L4.1 13.1 L3.5 13.2 L3.0 13.1 L2.5 12.9 L2.3 12.4 L2.2 11.9 L2.3 11.3 L2.4 10.8 L2.4 10.3 L2.3 9.9 L2.1 9.6 L1.7 9.3 L1.3 9.0 L0.8 8.6 L0.5 8.2 L0.4 7.7 L0.5 7.2 L0.8 6.8 L1.3 6.4 L1.7 6.1 L2.1 5.8 L2.3 5.5 L2.4 5.1 L2.4 4.6 L2.3 4.1 L2.2 3.5 L2.3 3.0 L2.5 2.5 L3.0 2.3 L3.5 2.2 L4.1 2.3 L4.6 2.4 L5.1 2.4 L5.5 2.3 L5.8 2.1 L6.1 1.7 L6.4 1.3 L6.8 0.8 L7.2 0.5 L7.7 0.4 L8.2 0.5 L8.6 0.8 L9.0 1.3 L9.3 1.7 L9.6 2.1 L9.9 2.3 L10.3 2.4 L10.8 2.4 L11.3 2.3 L11.9 2.2 L12.4 2.3 L12.9 2.5 L13.1 3.0 L13.2 3.5 L13.1 4.1 L13.0 4.6 L13.0 5.1 L13.1 5.5 L13.3 5.8 L13.7 6.1 L14.1 6.4 L14.6 6.8 L14.9 7.2 Z" fill="#dedede" stroke="#c0c0c0" stroke-width="1"/><circle cx="7.700" cy="7.700" r="3.100" fill="#fafafa" stroke="#c8c8c8" stroke-width="1.100"/></svg>
<div class="a st dis bold serif" style="left:726px;top:266px;letter-spacing:1px;font-weight:900;color:#7c7c7c !important">更新领料数量</div>
<svg class="a" style="left:811px;top:271px" width="5" height="3" viewBox="0 0 5 3"><path d="M0 0 H5 L2.500 3 Z" fill="#8d8d8d"/></svg>
<div class="a ssep" style="left:823px;top:262px"></div>
<!-- SUBTOOLBAR 2 -->
<div class="a stb" id="stb2"></div>
<div class="a grip" style="left:7px;top:378px"></div>
<div class="a grip" style="left:7px;top:382px"></div>
<div class="a grip" style="left:7px;top:386px"></div>
<div class="a grip" style="left:7px;top:390px"></div>
<div class="a grip" style="left:7px;top:394px"></div>
<div class="a grip" style="left:7px;top:398px"></div>
<div class="a st " style="left:17px;top:384px">领料明细<b class="col">:</b></div>
<svg class="a" style="left:86px;top:383px" width="14" height="14" viewBox="0 0 14 14"><circle cx="7" cy="7" r="7" fill="#a0a0a0"/><circle cx="7" cy="7" r="5.900" fill="#bababa"/><path d="M7 2.800 V11.200 M2.800 7 H11.200" stroke="#fff" stroke-width="3.200"/></svg>
<div class="a st dis" style="left:104px;top:384px">添加明细</div>
<svg class="a" style="left:161px;top:383px" width="14" height="14" viewBox="0 0 14 14"><circle cx="7" cy="7" r="7" fill="#6e6e6e"/><circle cx="7" cy="7" r="5.900" fill="#868686"/><path d="M4.200 4.200 L9.800 9.800 M9.800 4.200 L4.200 9.800" stroke="#fff" stroke-width="2.700"/></svg>
<div class="a st dis" style="left:179px;top:384px">删除明细</div>
<div class="a ssep" style="left:235px;top:378px"></div>
<svg class="a" style="left:244px;top:383px" width="13" height="14" viewBox="0 0 13 14"><circle cx="8.5" cy="4.5" r="3.6" fill="#e6e6e6" stroke="#bdbdbd" stroke-width="1.2"/><circle cx="9.3" cy="3.7" r="1" fill="#fff"/><path d="M6 7 L1 12.5 L2 13.5 L3.2 12.4 L4 13 L5 12 L4.4 11.2 L7.4 8.3" fill="#dedede" stroke="#bdbdbd" stroke-width="0.9"/></svg>
<div class="a st dis" style="left:261px;top:384px">扫描条形码</div>
<div class="a ssep" style="left:329px;top:378px"></div>
<svg class="a" style="left:338px;top:383px" width="12" height="14" viewBox="0 0 12 14"><path d="M6 0.8 L11.3 6.5 H8.3 V13 H3.7 V6.5 H0.7 Z" fill="#d4d4d4" stroke="#a8a8a8" stroke-width="1"/></svg>
<div class="a st dis" style="left:355px;top:384px">上移</div>
<svg class="a" style="left:390px;top:383px" width="12" height="14" viewBox="0 0 12 14"><path d="M6 13.2 L11.3 7.5 H8.3 V1 H3.7 V7.5 H0.7 Z" fill="#b4b4b4" stroke="#8f8f8f" stroke-width="1"/></svg>
<div class="a st dis" style="left:407px;top:384px">下移</div>
<div class="a ssep" style="left:438px;top:378px"></div>
<svg class="a" style="left:445px;top:382px" width="15" height="15" viewBox="0 0 15 15"><path d="M1.5 6.5 A6 5.5 0 0 1 12 3.5 L13.5 2 V7 H8.5 L10.3 5.2 A3.8 3.5 0 0 0 4 6.5 Z" fill="#4d9be8"/><path d="M13.5 8.5 A6 5.5 0 0 1 3 11.5 L1.5 13 V8 H6.5 L4.7 9.8 A3.8 3.5 0 0 0 11 8.5 Z" fill="#4d9be8"/></svg>
<div class="a st " style="left:464px;top:384px">刷新成本</div>
<svg class="a" style="left:521px;top:383px" width="14" height="14" viewBox="0 0 14 14"><rect x="0.500" y="0.500" width="13" height="13" fill="#fff" stroke="#a8a8b0" stroke-width="1"/><rect x="1" y="1" width="3" height="3" fill="#dedef5"/><rect x="5" y="1" width="3" height="3" fill="#dedef5"/><rect x="9" y="1" width="4" height="3" fill="#dedef5"/><rect x="1" y="5" width="3" height="3" fill="#f9c668"/><rect x="5" y="5" width="3" height="3" fill="#f9c668"/><rect x="9" y="5" width="4" height="3" fill="#f9c668"/><rect x="1" y="9" width="3" height="4" fill="#dedef5"/><rect x="5" y="9" width="3" height="4" fill="#dedef5"/><rect x="9" y="9" width="4" height="4" fill="#dedef5"/></svg>
<div class="a st " style="left:539px;top:384px">查看库存</div>
<div class="a ssep" style="left:595px;top:378px"></div>
<svg class="a" style="left:602px;top:383px" width="15" height="14" viewBox="0 0 15 14"><path d="M1.500 2 L7.500 6.200 L13.500 2" fill="none" stroke="#3f8ee6" stroke-width="3"/><path d="M1.500 7.600 L7.500 11.800 L13.500 7.600" fill="none" stroke="#3f8ee6" stroke-width="3"/><path d="M1.500 1.500 L7.500 5.700 L13.500 1.500" fill="none" stroke="#7cb8f4" stroke-width="0.900"/><path d="M1.500 7.100 L7.500 11.300 L13.500 7.100" fill="none" stroke="#7cb8f4" stroke-width="0.900"/></svg>
<div class="a st " style="left:621px;top:384px">更多操作</div>
<svg class="a" style="left:676px;top:389px" width="5" height="3" viewBox="0 0 5 3"><path d="M0 0 H5 L2.500 3 Z" fill="#1e395b"/></svg>
<!-- GRID 1 -->
<div class="a grid" style="left:3px;top:284px;width:836px;height:87px">
<div class="a gh" style="left:0px;width:14px"></div>
<div class="a gh" style="left:14px;width:40px">序号</div>
<div class="a gh" style="left:54px;width:83px">商品编码</div>
<div class="a gh" style="left:137px;width:120px">商品名称</div>
<div class="a gh" style="left:257px;width:85px">规格</div>
<div class="a gh" style="left:342px;width:96px">批号</div>
<div class="a gh" style="left:438px;width:49px">单位</div>
<div class="a gh" style="left:487px;width:54px">数量</div>
<div class="a gh" style="left:541px;width:130px">备注</div>
<div class="a gh" style="left:671px;width:164px">引单信息</div>
<div class="a ind" style="left:0px;top:22px;width:14px;height:22px"><div class="tri"></div></div>
<div class="a gc r1 c" style="left:14px;top:22px;width:40px"><span class="num">1</span></div>
<div class="a gc r1" style="left:54px;top:22px;width:83px"></div>
<div class="a gc r1" style="left:137px;top:22px;width:120px">电脑</div>
<div class="a gc r1" style="left:257px;top:22px;width:85px"></div>
<div class="a gc r1" style="left:342px;top:22px;width:96px"></div>
<div class="a gc r1" style="left:438px;top:22px;width:49px">台</div>
<div class="a gc r1" style="left:487px;top:22px;width:54px"><span class="num">10</span></div>
<div class="a gc r1" style="left:541px;top:22px;width:130px"></div>
<div class="a gc r1" style="left:671px;top:22px;width:164px"><span class="num"><span class="ms">SCRWD</span><span class="ps hy">-</span>20180928<span class="ps hy">-</span>0003</span></div>
<div class="a gf" style="left:0;top:62px;width:835px;height:24px"></div>
<div class="a" style="left:1px;top:64px;width:13px;height:7px;background:#fbfbfb"></div>
<div class="a gft" style="left:487px;top:63px;width:54px">10</div>
</div>
<!-- GRID 2 -->
<div class="a grid" style="left:3px;top:406px;width:889px;height:146px">
<div class="a gh" style="left:0px;width:14px"></div>
<div class="a gh" style="left:14px;width:40px">序号</div>
<div class="a gh" style="left:54px;width:83px">原材料编码</div>
<div class="a gh" style="left:137px;width:120px">原材料名称</div>
<div class="a gh" style="left:257px;width:85px">规格</div>
<div class="a gh" style="left:342px;width:49px">单位</div>
<div class="a gh" style="left:391px;width:54px">数量</div>
<div class="a gh" style="left:445px;width:61px">单价</div>
<div class="a gh" style="left:506px;width:55px">金额</div>
<div class="a gh" style="left:561px;width:130px">备注</div>
<div class="a gh" style="left:691px;width:197px">引单信息</div>
<div class="a ind" style="left:0px;top:22px;width:14px;height:22px"><div class="tri"></div></div>
<div class="a gc r1 c" style="left:14px;top:22px;width:40px"><span class="num">1</span></div>
<div class="a gc r1" style="left:54px;top:22px;width:83px"></div>
<div class="a gc r1" style="left:137px;top:22px;width:120px">显示屏</div>
<div class="a gc r1" style="left:257px;top:22px;width:85px"></div>
<div class="a gc r1" style="left:342px;top:22px;width:49px">台</div>
<div class="a gc r1" style="left:391px;top:22px;width:54px"><span class="num">10</span></div>
<div class="a gc r1" style="left:445px;top:22px;width:61px"><span class="num">100</span></div>
<div class="a gc r1" style="left:506px;top:22px;width:55px"><span class="num">1000</span></div>
<div class="a gc r1" style="left:561px;top:22px;width:130px"></div>
<div class="a gc r1" style="left:691px;top:22px;width:197px"></div>
<div class="a ind" style="left:0px;top:44px;width:14px;height:22px"></div>
<div class="a gc r2 c" style="left:14px;top:44px;width:40px"><span class="num">2</span></div>
<div class="a gc r2" style="left:54px;top:44px;width:83px"></div>
<div class="a gc r2" style="left:137px;top:44px;width:120px">主机</div>
<div class="a gc r2" style="left:257px;top:44px;width:85px"></div>
<div class="a gc r2" style="left:342px;top:44px;width:49px">台</div>
<div class="a gc r2" style="left:391px;top:44px;width:54px"><span class="num">10</span></div>
<div class="a gc r2" style="left:445px;top:44px;width:61px"><span class="num">100</span></div>
<div class="a gc r2" style="left:506px;top:44px;width:55px"><span class="num">1000</span></div>
<div class="a gc r2" style="left:561px;top:44px;width:130px"></div>
<div class="a gc r2" style="left:691px;top:44px;width:197px"></div>
<div class="a ind" style="left:0px;top:66px;width:14px;height:22px"></div>
<div class="a gc r1 c" style="left:14px;top:66px;width:40px"><span class="num">3</span></div>
<div class="a gc r1" style="left:54px;top:66px;width:83px"></div>
<div class="a gc r1" style="left:137px;top:66px;width:120px">键盘</div>
<div class="a gc r1" style="left:257px;top:66px;width:85px"></div>
<div class="a gc r1" style="left:342px;top:66px;width:49px">个</div>
<div class="a gc r1" style="left:391px;top:66px;width:54px"><span class="num">10</span></div>
<div class="a gc r1" style="left:445px;top:66px;width:61px"><span class="num">100</span></div>
<div class="a gc r1" style="left:506px;top:66px;width:55px"><span class="num">1000</span></div>
<div class="a gc r1" style="left:561px;top:66px;width:130px"></div>
<div class="a gc r1" style="left:691px;top:66px;width:197px"></div>
<div class="a gf" style="left:0;top:121px;width:888px;height:24px"></div>
<div class="a" style="left:1px;top:123px;width:13px;height:7px;background:#fbfbfb"></div>
<div class="a gft" style="left:391px;top:122px;width:54px">30</div>
<div class="a gft" style="left:506px;top:122px;width:55px">3000</div>
</div>
<div class="a" style="left:3px;top:551px;width:1073px;height:1px;background:#6f6f6f"></div><div class="a" style="left:3px;top:370px;width:1073px;height:1px;background:#6f6f6f"></div>
<!-- FOOTER -->
<div class="a lbl" style="left:8px;top:562px">制单人</div>
<div class="a" style="left:73px;top:559px;width:84px;height:17px;background:#e9e9e9"></div>
<div class="a lbl" style="left:74px;top:559px;color:#858585">系统管理员</div>
<div class="a ul" style="left:73px;top:576px;width:84px;background:#8a8a8a"></div>
<div class="a lbl" style="left:183px;top:562px">制单日期</div>
<div class="a" style="left:248px;top:559px;width:103px;height:17px;background:#e9e9e9"></div>
<div class="a fld" style="left:249px;top:559px;color:#858585">2018<span class="pb hy">-</span>09<span class="pb hy">-</span>28</div>
<div class="a ul" style="left:248px;top:576px;width:103px;background:#8a8a8a"></div>
</body>
</html>
